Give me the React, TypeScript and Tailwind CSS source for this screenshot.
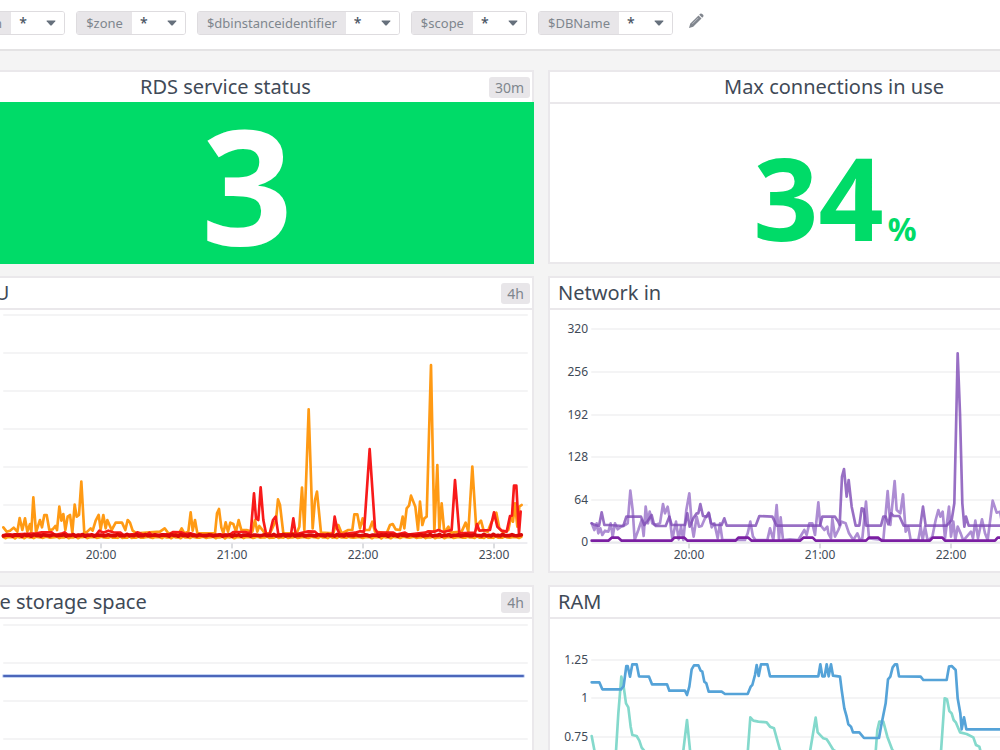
import type { ReactNode } from "react";

// Series are drawn on a grid of thirds of a pixel, "x,y" pairs with y going down.
const cpuUser =
  "10,682 20,695 30,692 41,683 52,695 59,654 67,690 75,655 82,695 90,672 94,697 100,592 108,697 120,660 126,682 133,645 140,645 148,690 158,688 166,678 171,690 178,620 184,662 190,642 196,690 203,650 210,645 217,698 224,614 230,650 237,645 244,545 253,700 262,695 272,685 278,692 287,662 296,645 302,688 310,645 317,685 322,660 335,690 347,668 366,668 376,690 383,660 390,668 398,692 410,700 480,695 494,685 505,700 538,698 545,685 553,700 565,695 572,637 578,692 585,660 592,700 645,700 651,640 657,627 664,682 670,700 677,667 684,695 691,668 700,672 708,695 716,660 724,690 740,690 757,695 765,660 772,695 778,678 795,700 810,700 828,660 834,598 840,615 850,700 890,700 898,680 906,563 913,690 926,328 938,685 945,600 951,575 963,698 1000,700 1007,675 1015,675 1025,700 1045,690 1057,690 1063,643 1072,643 1080,685 1088,655 1095,690 1108,690 1117,665 1125,695 1160,700 1170,675 1178,672 1187,688 1200,690 1208,650 1213,685 1220,625 1227,617 1233,587 1246,620 1254,690 1260,605 1267,675 1273,655 1280,650 1293,195 1303,695 1312,495 1318,690 1325,610 1333,698 1345,680 1353,698 1385,695 1397,668 1405,695 1417,500 1429,690 1436,670 1443,662 1451,692 1463,695 1473,670 1489,638 1498,685 1510,698 1525,690 1533,650 1539,665 1545,610 1552,680 1558,620 1565,615";
const cpuSystem =
  "10,705 110,700 125,697 155,697 165,705 188,700 195,697 203,705 288,705 298,692 310,698 325,692 340,697 362,698 370,705 405,702 412,697 425,702 440,705 448,698 455,705 510,702 520,696 545,697 555,702 572,700 590,706 690,704 700,696 735,696 752,700 762,580 768,655 775,660 782,562 790,660 798,700 808,705 819,660 827,650 835,703 873,703 880,655 887,703 925,694 945,695 955,704 998,703 1004,650 1011,685 1020,704 1065,698 1080,694 1092,695 1109,447 1125,685 1132,698 1180,698 1190,704 1215,698 1225,704 1275,698 1285,694 1303,695 1315,690 1330,696 1355,690 1365,540 1378,700 1425,698 1431,672 1438,692 1470,690 1482,637 1492,680 1505,692 1520,695 1530,648 1536,647 1542,557 1549,557 1557,700 1562,635";
const netLight =
  "140,640 148,660 155,640 160,670 166,655 172,675 180,662 190,665 197,640 203,680 210,640 218,658 228,650 240,645 248,640 256,542 263,600 269,690 280,660 290,630 296,678 302,590 309,640 314,605 322,640 330,645 345,640 354,582 360,610 368,590 375,630 382,688 393,635 401,688 408,650 415,690 424,600 433,550 441,650 446,680 455,620 462,650 470,648 480,625 492,610 500,652 508,640 518,685 525,640 532,690 600,690 608,670 616,635 624,680 632,690 667,690 675,655 685,690 695,585 702,690 707,622 714,690 735,688 760,690 778,660 785,675 793,640 802,640 810,675 820,577 826,645 838,660 847,650 850,670 858,685 862,625 870,680 880,660 890,635 902,640 912,670 925,690 937,670 945,690 952,685 963,575 972,685 1015,690 1028,543 1036,645 1049,513 1055,600 1066,610 1074,553 1082,665 1090,650 1097,690 1120,690 1127,650 1133,690 1140,650 1148,692 1162,680 1172,630 1180,600 1186,620 1193,605 1200,685 1212,590 1218,680 1225,635 1231,690 1238,650 1247,670 1255,692 1278,665 1284,685 1291,632 1299,685 1311,628 1320,670 1328,690 1343,572 1355,608 1365,605 1380,690 1700,690";
const netMid =
  "140,640 150,645 162,648 170,607 178,645 190,645 235,648 244,620 288,620 298,645 310,630 320,615 326,640 333,648 362,648 373,620 380,645 420,645 427,610 434,650 445,625 455,610 460,610 466,582 474,618 485,620 491,608 498,640 510,645 530,645 538,625 545,647 632,647 643,618 682,620 695,647 825,647 832,620 870,620 880,635 884,645 891,500 897,477 905,560 911,510 920,590 932,647 943,647 950,595 956,597 963,647 1008,647 1015,620 1022,620 1030,643 1038,610 1046,618 1063,618 1076,647 1126,647 1134,590 1142,647 1205,647 1220,630 1228,580 1233,360 1238,130 1245,310 1252,580 1258,650 1263,620 1271,647 1700,647";
const netDark =
  "140,692 190,692 200,683 220,683 230,692 380,692 388,683 418,683 427,692 572,692 580,683 610,683 620,692 765,692 775,683 803,683 812,692 963,692 972,683 1000,683 1010,692 1155,692 1163,683 1192,683 1200,692 1350,692 1358,683 1385,683 1395,692 1700,692";
const ramBlue =
  "140,307 163,307 172,328 228,328 236,318 244,258 248,258 255,290 262,253 275,253 282,289 312,290 321,313 366,313 373,332 420,332 426,345 433,320 440,268 447,256 460,256 467,272 472,275 478,305 484,310 491,335 530,335 540,342 608,342 617,320 622,315 630,285 635,255 641,288 648,253 667,253 675,289 820,289 826,253 832,289 839,289 845,253 851,289 858,253 864,287 885,290 890,330 898,385 905,410 910,433 918,440 924,457 943,457 957,474 1002,474 1008,440 1022,370 1029,298 1036,290 1043,262 1050,253 1056,253 1062,289 1127,290 1135,300 1205,300 1212,260 1220,258 1232,270 1238,355 1246,400 1250,448 1257,412 1264,448 1700,448";
const ramTeal =
  "140,468 150,520 180,560 212,530 220,400 229,290 236,320 243,370 250,382 257,440 262,465 275,468 283,482 290,503 300,515 350,560 414,520 426,420 436,520 500,570 608,520 616,412 625,422 640,425 665,427 675,440 687,445 705,510 740,570 795,515 812,413 818,457 835,475 845,478 853,490 865,510 940,550 992,515 997,450 1003,425 1015,425 1027,470 1042,510 1100,560 1188,515 1199,355 1206,358 1213,393 1220,400 1226,420 1233,428 1245,457 1265,462 1285,472 1293,495 1303,500 1307,515 1400,560";

// Small wobble around a flat level, for the idle instances
function flat(y: number, seed: number) {
  const pts: string[] = [];
  for (let x = 10, i = seed; x <= 1565; x += 7, i++) {
    pts.push(`${x},${(y + 3 * Math.sin(i * 2.3) * Math.cos(i * 0.7)).toFixed(1)}`);
  }
  return pts.join(" ");
}

const hours = ["20:00", "21:00", "22:00", "23:00"];

function Filter({ name }: { name: string }) {
  return (
    <div className="flex h-6 shrink-0 overflow-hidden rounded-[3px] border border-[#dedcdf] bg-white">
      <label
        htmlFor={name}
        className="bg-[#e8e6e9] px-[9px] text-[13px] leading-[22px] text-[#7f868e]"
      >
        ${name}
      </label>
      <div className="relative">
        <select
          id={name}
          className="block h-[22px] w-[53px] appearance-none bg-white pl-2 text-[14px] leading-[22px] font-medium text-[#4b5563]"
        >
          <option>*</option>
        </select>
        <svg
          className="pointer-events-none absolute top-2 right-2 h-[6px] w-[10px]"
          viewBox="0 0 10 6"
          fill="#66707c"
        >
          <path d="M1 0.5h8q0.8 0 0.3 0.8L5.8 5.2q-0.8 0.8-1.6 0L0.7 1.3Q0.2 0.5 1 0.5z" />
        </svg>
      </div>
    </div>
  );
}

function Card({
  title,
  span,
  center,
  children,
}: {
  title: string;
  span?: string;
  center?: boolean;
  children: ReactNode;
}) {
  return (
    <section className="flex flex-col border-2 border-[#eae8eb] bg-white">
      <header className="flex h-8 items-center border-b-2 border-[#eae8eb] pr-0.5">
        <h2
          className={
            center
              ? "flex-1 text-center text-[20px] leading-7 text-[#3f4a57]"
              : "flex-1 pl-2 text-[20px] leading-7 text-[#3f4a57]"
          }
        >
          {title}
        </h2>
        {span && (
          <span className="rounded-[3px] bg-[#e8e6e9] px-1.5 text-[14px] leading-[21px] text-[#7f868e]">
            {span}
          </span>
        )}
      </header>
      {children}
    </section>
  );
}

function Chart({
  grid,
  labels = [],
  axis,
  children,
}: {
  grid: number[];
  labels?: string[];
  axis: number;
  children: ReactNode;
}) {
  return (
    <svg
      viewBox="0 0 570 261"
      className="block h-auto w-full text-[12px]"
      fill="none"
      strokeLinejoin="round"
      strokeLinecap="round"
    >
      {grid.map((y) => (
        <line key={y} x1="42" x2="565" y1={y} y2={y} stroke="#f4f4f5" strokeWidth="2" />
      ))}
      {labels.map((label, i) => (
        <text key={label} x="38" y={grid[i] + 4} textAnchor="end" fill="#3f4a57">
          {label}
        </text>
      ))}
      <line x1="42" x2="565" y1={axis} y2={axis} stroke="#dcdce3" strokeWidth="1" />
      {hours.map((h, i) => (
        <g key={h}>
          <line
            x1={139 + i * 131}
            x2={139 + i * 131}
            y1={axis + 1}
            y2={axis + 5}
            stroke="#b9bcc2"
            strokeWidth="1"
          />
          <text x={139 + i * 131} y={axis + 16} textAnchor="middle" fill="#3f4a57">
            {h}
          </text>
        </g>
      ))}
      {children}
    </svg>
  );
}

export default function App() {
  return (
    <div className="h-screen overflow-hidden bg-[#f4f4f4] font-['Noto_Sans',sans-serif]">
      <nav className="-ml-[55px] flex h-[51px] items-start gap-[11px] border-b-2 border-[#e4e3e4] bg-white pt-[11px]">
        <Filter name="region" />
        <Filter name="zone" />
        <Filter name="dbinstanceidentifier" />
        <Filter name="scope" />
        <Filter name="DBName" />
        <button aria-label="Edit variables" className="ml-0.5 p-0.5">
          <svg viewBox="0 0 16 16" className="h-4 w-4" fill="#81868e">
            <path d="M11.2 1.800l1-1q1-.8 2 .1l.9.9q.9 1 .1 2l-1 1z" />
            <path d="M10.500 2.500l3 3-8.300 8.300L1 15l1.200-4.200z" />
            <path d="M10.300 4.900L4.400 10.800" stroke="#c9cbd0" strokeWidth="0.800" />
          </svg>
        </button>
      </nav>

      <main className="mt-[19px] -ml-10 grid w-[116.2%] grid-cols-2 gap-x-3.5 gap-y-3">
        <Card title="RDS service status" span="30m" center>
          <div className="-mx-0.5 -mt-0.5 -mb-0.5 flex h-[162px] items-center justify-center bg-[#00db68] text-[160px] leading-none font-bold text-white">
            3
          </div>
        </Card>
        <Card title="Max connections in use" center>
          <div className="flex h-[158px] items-baseline justify-center gap-1 pt-9 leading-none font-bold text-[#00db68]">
            <span className="text-[114px]">34</span>
            <span className="text-[32px]">%</span>
          </div>
        </Card>

        <Card title="CPU" span="4h">
          <Chart grid={[5, 43, 81, 119, 157, 195]} axis={233}>
            <g transform="translate(38 -10) scale(0.33333)" strokeWidth="8">
              <polyline points={cpuUser} stroke="#ff9a14" />
              <polyline points={flat(712, 4)} stroke="#ff9a14" />
              <polyline points={cpuSystem} stroke="#f81a1a" />
              <polyline points={flat(706, 1)} stroke="#d80808" strokeWidth="11" />
            </g>
          </Chart>
        </Card>
        <Card title="Network in" span="4h">
          <Chart
            grid={[19, 62, 105, 147, 190, 232]}
            labels={["320", "256", "192", "128", "64", "0"]}
            axis={233}
          >
            <g transform="translate(-5 0) scale(0.33333)" strokeWidth="8">
              <polyline points={netLight} stroke="#ad8dd3" />
              <polyline points={netMid} stroke="#7e4bb5" strokeOpacity="0.8" />
              <polyline points={netDark} stroke="#7b1fa2" />
            </g>
          </Chart>
        </Card>

        <Card title="Free storage space" span="4h">
          <Chart grid={[6, 44, 82, 120, 158, 196]} axis={233}>
            <line x1="42" x2="561" y1="57" y2="57" stroke="#c3d3f2" strokeWidth="4" />
            <line x1="42" x2="561" y1="57" y2="57" stroke="#4c66ba" strokeWidth="2" />
          </Chart>
        </Card>
        <Card title="RAM" span="4h">
          <Chart
            grid={[41, 79, 118, 156, 194, 232]}
            labels={["1.25", "1", "0.75", "0.5", "0.25", "0"]}
            axis={233}
          >
            <g transform="translate(-5 -39) scale(0.33333)" strokeWidth="8">
              <polyline points={ramTeal} stroke="#84d9cc" />
              <polyline points={ramBlue} stroke="#55a3d8" />
            </g>
          </Chart>
        </Card>
      </main>
    </div>
  );
}
